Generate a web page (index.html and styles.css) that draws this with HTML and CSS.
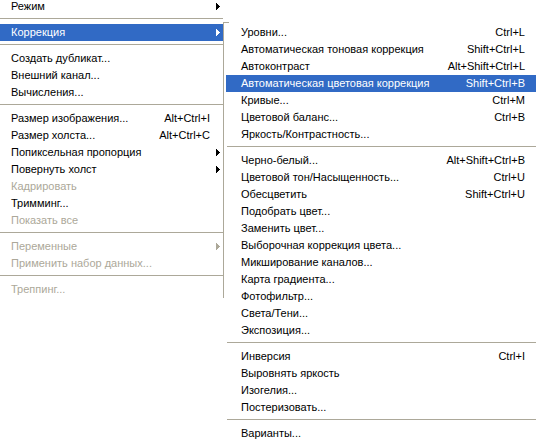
FILE: index.html
```html
<!DOCTYPE html>
<html lang="ru">
<head>
<meta charset="utf-8">
<title>Изображение — Коррекция</title>
<link rel="stylesheet" href="styles.css">
</head>
<body>
<div class="page">
  <div class="menu main">
    <div class="item"><span class="label">Режим</span><span class="sub-arrow"><svg width="4" height="7" viewBox="0 0 4 7"><path d="M0 0h1v7H0zM1 1h1v5H1zM2 2h1v3H2zM3 3h1v1H3z"/></svg></span></div>
    <div class="sep"></div>
    <div class="item active"><span class="label">Коррекция</span><span class="sub-arrow"><svg width="4" height="7" viewBox="0 0 4 7"><path d="M0 0h1v7H0zM1 1h1v5H1zM2 2h1v3H2zM3 3h1v1H3z"/></svg></span></div>
    <div class="sep"></div>
    <div class="item"><span class="label">Создать дубликат...</span><span class="sub-arrow"></span></div>
    <div class="item"><span class="label">Внешний канал...</span><span class="sub-arrow"></span></div>
    <div class="item"><span class="label">Вычисления...</span><span class="sub-arrow"></span></div>
    <div class="sep"></div>
    <div class="item"><span class="label">Размер изображения...</span><span class="key">Alt+Ctrl+I</span><span class="sub-arrow"></span></div>
    <div class="item"><span class="label">Размер холста...</span><span class="key">Alt+Ctrl+C</span><span class="sub-arrow"></span></div>
    <div class="item"><span class="label">Попиксельная пропорция</span><span class="sub-arrow"><svg width="4" height="7" viewBox="0 0 4 7"><path d="M0 0h1v7H0zM1 1h1v5H1zM2 2h1v3H2zM3 3h1v1H3z"/></svg></span></div>
    <div class="item"><span class="label">Повернуть холст</span><span class="sub-arrow"><svg width="4" height="7" viewBox="0 0 4 7"><path d="M0 0h1v7H0zM1 1h1v5H1zM2 2h1v3H2zM3 3h1v1H3z"/></svg></span></div>
    <div class="item disabled"><span class="label">Кадрировать</span><span class="sub-arrow"></span></div>
    <div class="item"><span class="label">Тримминг...</span><span class="sub-arrow"></span></div>
    <div class="item disabled"><span class="label">Показать все</span><span class="sub-arrow"></span></div>
    <div class="sep"></div>
    <div class="item disabled"><span class="label">Переменные</span><span class="sub-arrow"><svg width="4" height="7" viewBox="0 0 4 7"><path d="M0 0h1v7H0zM1 1h1v5H1zM2 2h1v3H2zM3 3h1v1H3z"/></svg></span></div>
    <div class="item disabled"><span class="label">Применить набор данных...</span><span class="sub-arrow"></span></div>
    <div class="sep"></div>
    <div class="item disabled"><span class="label">Треппинг...</span><span class="sub-arrow"></span></div>
  </div>

  <div class="menu submenu">
    <div class="item"><span class="label">Уровни...</span><span class="key">Ctrl+L</span></div>
    <div class="item"><span class="label">Автоматическая тоновая коррекция</span><span class="key">Shift+Ctrl+L</span></div>
    <div class="item"><span class="label">Автоконтраст</span><span class="key">Alt+Shift+Ctrl+L</span></div>
    <div class="item active"><span class="label">Автоматическая цветовая коррекция</span><span class="key">Shift+Ctrl+B</span></div>
    <div class="item"><span class="label">Кривые...</span><span class="key">Ctrl+M</span></div>
    <div class="item"><span class="label">Цветовой баланс...</span><span class="key">Ctrl+B</span></div>
    <div class="item"><span class="label">Яркость/Контрастность...</span></div>
    <div class="sep"></div>
    <div class="item"><span class="label">Черно-белый...</span><span class="key">Alt+Shift+Ctrl+B</span></div>
    <div class="item"><span class="label">Цветовой тон/Насыщенность...</span><span class="key">Ctrl+U</span></div>
    <div class="item"><span class="label">Обесцветить</span><span class="key">Shift+Ctrl+U</span></div>
    <div class="item"><span class="label">Подобрать цвет...</span></div>
    <div class="item"><span class="label">Заменить цвет...</span></div>
    <div class="item"><span class="label">Выборочная коррекция цвета...</span></div>
    <div class="item"><span class="label">Микширование каналов...</span></div>
    <div class="item"><span class="label">Карта градиента...</span></div>
    <div class="item"><span class="label">Фотофильтр...</span></div>
    <div class="item"><span class="label">Света/Тени...</span></div>
    <div class="item"><span class="label">Экспозиция...</span></div>
    <div class="sep"></div>
    <div class="item"><span class="label">Инверсия</span><span class="key">Ctrl+I</span></div>
    <div class="item"><span class="label">Выровнять яркость</span></div>
    <div class="item"><span class="label">Изогелия...</span></div>
    <div class="item"><span class="label">Постеризовать...</span></div>
    <div class="sep"></div>
    <div class="item"><span class="label">Варианты...</span></div>
  </div>
</div>
</body>
</html>
```

FILE: styles.css
```css
html, body {
  margin: 0;
  padding: 0;
  background: #ffffff;
  overflow: hidden;
}

body {
  width: 539px;
  height: 441px;
  font-family: "Liberation Sans", Arial, sans-serif;
  font-size: 11px;
  color: #000000;
}

.page {
  display: flex;
  align-items: flex-start;
}

.menu {
  display: flex;
  flex-direction: column;
}

.main {
  width: 223px;
  margin-top: -2px;
}

.submenu {
  position: relative;
  width: 310px;
  margin-top: 22px;
  padding: 2px 3px 0 3px;
}

/* partial border of the submenu (top-left corner) */
.submenu::before {
  content: "";
  position: absolute;
  left: 0;
  top: 0;
  width: 1px;
  height: 276px;
  background: #aca899;
}

.submenu::after {
  content: "";
  position: absolute;
  left: 0;
  top: 0;
  width: 6px;
  height: 1px;
  background: #aca899;
}

.item {
  display: flex;
  align-items: center;
  height: 17px;
  line-height: 17px;
  white-space: nowrap;
}

.main .item {
  padding: 0 3px 0 11px;
}

.submenu .item {
  padding: 0 11px 0 15px;
}

.label {
  flex: 1;
}

.key {
  text-align: right;
}

.sub-arrow {
  width: 10px;
  height: 7px;
  display: flex;
  justify-content: flex-end;
}

.sub-arrow svg {
  display: block;
  fill: currentColor;
}

.item.active {
  background: #316ac5;
  color: #ffffff;
}

.item.disabled {
  color: #aca899;
}

.sep {
  height: 9px;
  box-sizing: border-box;
  padding-top: 3px;
}

.sep::before {
  content: "";
  display: block;
  height: 1px;
  background: #aca899;
}

.submenu .sep {
  padding-left: 1px;
}
```
